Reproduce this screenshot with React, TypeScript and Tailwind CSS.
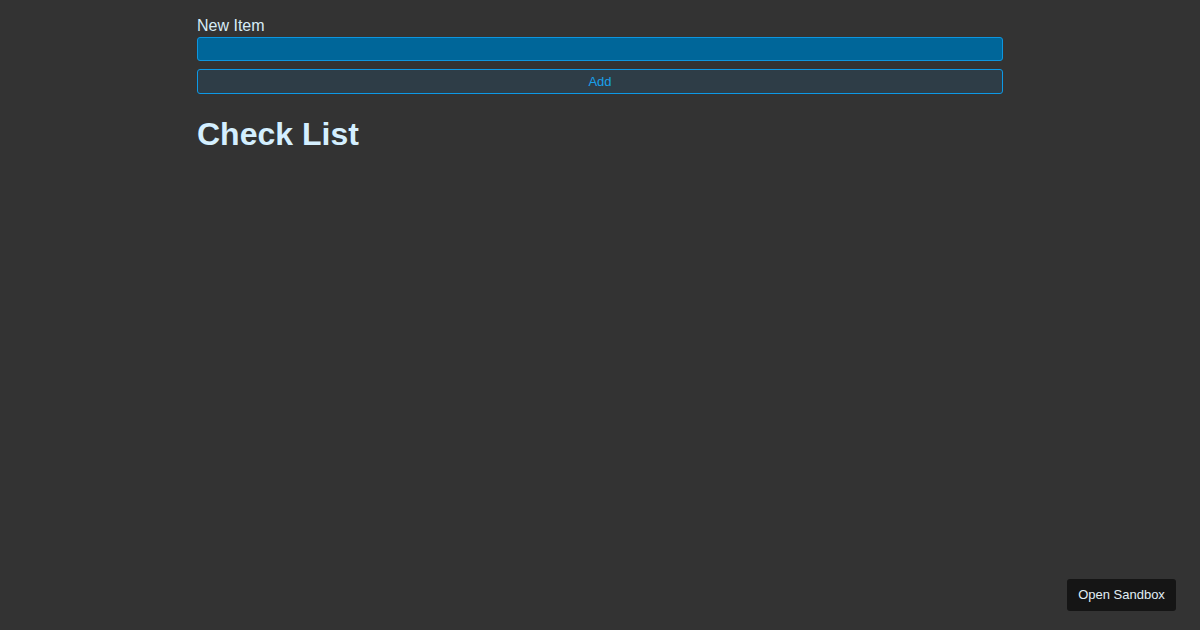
import React from "react";

export default function App() {
  return (
    <div className="min-h-[630px] w-full bg-[#333333] font-['Liberation_Sans',Arial,sans-serif]">
      <div className="mx-auto w-[806px] pt-[17px]">
        <label className="block text-[16px] leading-[18px] text-[#d7ecf7]">New Item</label>
        <input
          type="text"
          className="mt-[2px] block h-6 w-full rounded-[3px] border border-[#0d96e0] bg-[#006699] px-1 text-[13px] text-white outline-none"
        />
        <button className="mt-2 block h-[25px] w-full rounded-[3px] border border-[#0d99e6] bg-[#2e3d47] text-[13px] text-[#19a0ea]">
          Add
        </button>
        <h1 className="mt-[22px] text-[32px] font-bold leading-[37px] text-[#d4efff]">Check List</h1>
      </div>
      <button className="fixed bottom-[19px] right-[24px] h-8 w-[109px] rounded-[3px] bg-[#151515] text-[13px] text-[#e0eef5]">
        Open Sandbox
      </button>
    </div>
  );
}
